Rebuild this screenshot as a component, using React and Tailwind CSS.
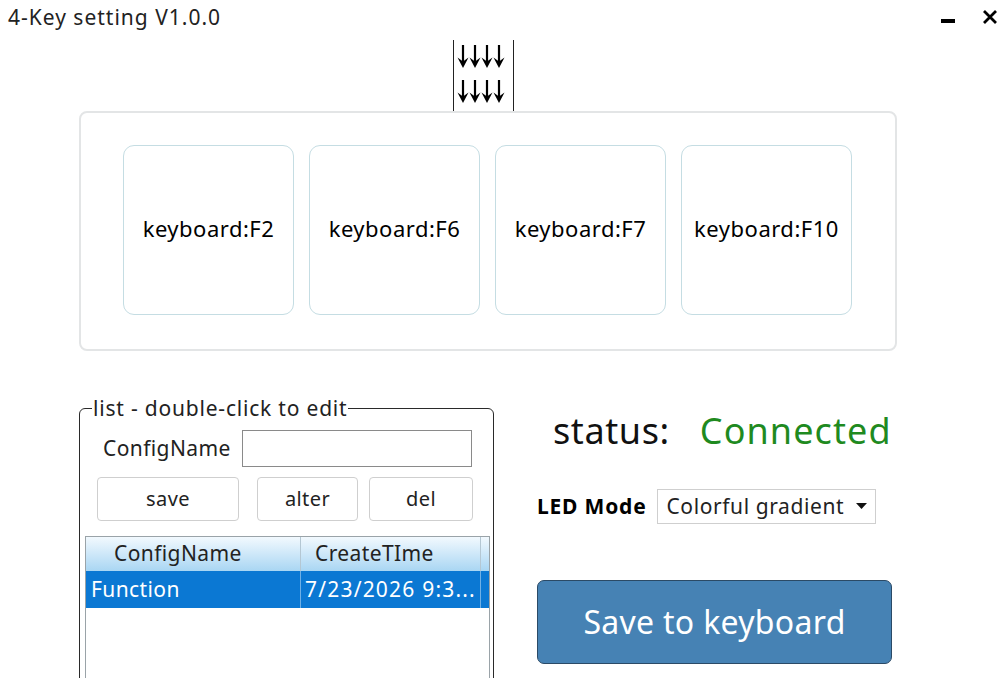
import React from "react";

const keys = ["keyboard:F2", "keyboard:F6", "keyboard:F7", "keyboard:F10"];

function DownArrow() {
  return (
    <svg width="12" height="23" viewBox="0 0 12 23">
      <path d="M6 0 V17" stroke="#000" strokeWidth="2.2" />
      <path d="M0.5 12.5 L6 23 L11.5 12.5 L6 16.5 Z" fill="#000" />
    </svg>
  );
}

function ArrowRow() {
  return (
    <div className="flex">
      <DownArrow />
      <DownArrow />
      <DownArrow />
      <DownArrow />
    </div>
  );
}

export default function App() {
  return (
    <div
      className="relative h-[678px] w-[1000px] overflow-hidden bg-white text-[#111]"
      style={{ fontFamily: '"Noto Sans", "Open Sans", sans-serif' }}
    >
      {/* title bar */}
      <div className="flex h-[40px] items-start justify-between">
        <div className="pl-[8px] pt-[3px] text-[21px] leading-[28px] tracking-[1px] text-[#222]">4-Key setting V1.0.0</div>
        <div className="flex items-start gap-[27px] pr-[2px] pt-[9px]">
          <div className="mt-[10px] h-[4px] w-[14px] bg-black" />
          <svg width="16" height="16" viewBox="0 0 16 16">
            <path d="M2 2 L14 14 M14 2 L2 14" stroke="#000" strokeWidth="2.8" />
          </svg>
        </div>
      </div>

      {/* input direction marker */}
      <div className="ml-[453px] flex h-[71px] w-[61px] flex-col gap-[12px] border-x border-[#222] pl-[3px] pt-[5px]">
        <ArrowRow />
        <ArrowRow />
      </div>

      {/* key panel */}
      <div className="ml-[79px] flex h-[240px] w-[818px] items-start rounded-[8px] border-2 border-[#e3e5e6] pl-[42px] pt-[32px]">
        <div className="flex gap-[15px]">
          {keys.map((k) => (
            <div
              key={k}
              className="flex h-[170px] w-[171px] items-center justify-center rounded-[11px] border border-[#c5dde3] pb-[4px] text-[22px] tracking-[0.5px] text-black"
            >
              {k}
            </div>
          ))}
        </div>
      </div>

      <div className="mt-[45px] flex">
        {/* config list group */}
        <fieldset className="ml-[79px] h-[320px] w-[415px] rounded-[6px] border border-[#2a2a2a]">
          <legend className="ml-[12px] px-[1px] text-[21px] leading-[24px] tracking-[0.8px] text-[#222]">list - double-click to edit</legend>
          <div className="mt-[10px] flex items-center">
            <span className="ml-[23px] text-[21px] tracking-[0.4px] text-[#222]">ConfigName</span>
            <input className="ml-[11px] h-[37px] w-[230px] border border-[#8a8a8a] bg-white outline-none" />
          </div>
          <div className="mt-[10px] flex text-[20px] tracking-[0.4px] text-[#222]">
            <button className="ml-[17px] h-[44px] w-[142px] rounded-[4px] border border-[#cfcfcf] bg-white">save</button>
            <button className="ml-[18px] h-[44px] w-[101px] rounded-[4px] border border-[#cfcfcf] bg-white">alter</button>
            <button className="ml-[11px] h-[44px] w-[104px] rounded-[4px] border border-[#cfcfcf] bg-white">del</button>
          </div>
          <div className="ml-[5px] mt-[15px] h-[160px] w-[405px] border border-[#9aa3a8] bg-white">
            <div className="flex h-[34px] bg-gradient-to-b from-[#f2f9fe] to-[#a9d6f3] text-[21px] tracking-[0.4px] text-[#222]">
              <div className="flex w-[215px] items-center border-r border-[#b4c7d3] pl-[28px]">ConfigName</div>
              <div className="flex w-[180px] items-center border-r border-[#b4c7d3] pl-[14px]">CreateTIme</div>
              <div className="flex-1" />
            </div>
            <div className="flex h-[37px] bg-[#0b78d3] text-[21px] text-white">
              <div className="flex w-[215px] items-center border-r border-[#6fb0e6] pl-[5px] tracking-[0.4px]">Function</div>
              <div className="flex w-[180px] items-center overflow-hidden whitespace-nowrap border-r border-[#6fb0e6] pl-[4px] tracking-[1.2px]">7/23/2026 9:3...</div>
              <div className="flex-1" />
            </div>
          </div>
        </fieldset>

        {/* status and actions */}
        <div className="ml-[43px] flex flex-col">
          <div className="mt-[12px] flex items-center text-[36px] leading-[46px]">
            <span className="ml-[16px] tracking-[0.6px] text-[#111]">status:</span>
            <span className="ml-[30px] tracking-[1.1px] text-[#1f8a1f]">Connected</span>
          </div>
          <div className="mt-[35px] flex items-center">
            <span className="text-[21px] font-bold tracking-[0.8px] text-black">LED Mode</span>
            <div className="ml-[11px] flex h-[35px] w-[219px] items-center border border-[#cfcfcf] pl-[8px] text-[21px] tracking-[0.6px] text-[#222]">
              <span>Colorful gradient</span>
              <svg className="ml-[12px]" width="11" height="7" viewBox="0 0 11 7">
                <path d="M0 0 H11 L5.5 6 Z" fill="#111" />
              </svg>
            </div>
          </div>
          <button className="mt-[56px] flex h-[84px] w-[355px] items-center justify-center rounded-[7px] border border-[#2b4a66] bg-[#4682b4] text-[32px] tracking-[0.3px] text-white">
            Save to keyboard
          </button>
        </div>
      </div>
    </div>
  );
}
